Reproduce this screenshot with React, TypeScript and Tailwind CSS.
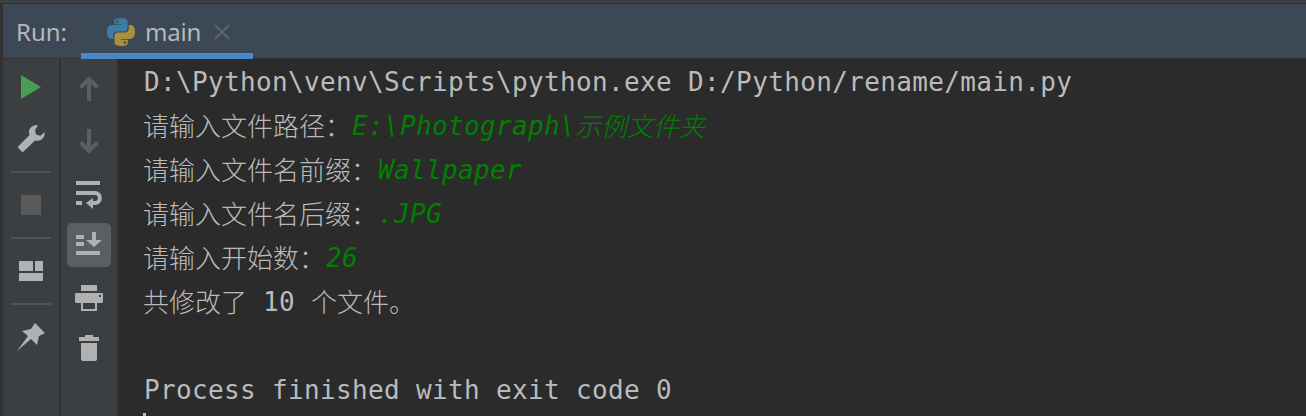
import React from "react";

function Latin({ children, green, still }: { children: React.ReactNode; green?: boolean; still?: boolean }) {
  return (
    <span className={`font-['DejaVu_Sans_Mono',monospace] text-[26px] tracking-[0.35px] whitespace-pre ${still ? "" : "translate-x-px"} ${green ? "italic text-[#008000]" : ""}`}>
      {children}
    </span>
  );
}

function Cjk({ children, green }: { children: React.ReactNode; green?: boolean }) {
  return (
    <span className={`font-['Noto_Sans_CJK_SC',sans-serif] font-light text-[26px] mb-[2px] whitespace-pre ${green ? "italic text-[#008000]" : ""}`}>
      {children}
    </span>
  );
}

function Row({ children }: { children?: React.ReactNode }) {
  return <div className="h-[44px] flex items-center whitespace-pre leading-none">{children}</div>;
}

function Btn({ children, active }: { children: React.ReactNode; active?: boolean }) {
  return (
    <div className={`w-[44px] h-[44px] rounded-[5px] flex items-center justify-center ${active ? "bg-[#5a5f61]" : ""}`}>
      {children}
    </div>
  );
}

function Sep() {
  return (
    <div className="h-[22px] w-full flex items-center justify-center">
      <div className="w-[40px] h-[2px] bg-[#505254]" />
    </div>
  );
}

const C = "#afb1b3";
const D = "#5c5f61";

function PythonLogo() {
  return (
    <svg width="28" height="28" viewBox="0 0 24 24">
      <path fill="#3d7ba6" d="M11.900 0C5.800 0 6.200 2.600 6.200 2.600v2.700h5.800v.8H3.900S0 5.700 0 11.900s3.400 6 3.400 6h2v-2.900s-.1-3.400 3.300-3.400h5.700s3.200.1 3.200-3.100V3.200S18.100 0 11.900 0zM8.700 1.900a1 1 0 1 1 0 2.100 1 1 0 0 1 0-2.100z" />
      <path fill="#a8913c" d="M12.100 24c6.100 0 5.700-2.600 5.700-2.600v-2.700H12v-.8h8.100s3.900.4 3.900-5.800-3.400-6-3.400-6h-2v2.900s.1 3.400-3.300 3.400H9.600s-3.200-.1-3.200 3.100v5.300S5.900 24 12.100 24zm3.200-1.900a1 1 0 1 1 0-2.100 1 1 0 0 1 0 2.100z" />
    </svg>
  );
}

export default function App() {
  return (
    <div className="w-[1306px] h-[416px] overflow-hidden flex flex-col bg-[#2b2b2b] text-[#bbbbbb]">
      <div className="h-[4px] bg-[#3c3f41] border-b border-[#323232]" />
      <div className="h-[55px] flex bg-[#3c4856] border-l-[3px] border-[#323232] border-b border-b-[#323232] font-['Noto_Sans',sans-serif]">
        <div className="w-[78px] pl-[13px] pt-[11px] text-[24px] leading-[34px] text-[#b5b8ba]">Run:</div>
        <div className="w-[172px] h-[55px] flex items-center pl-[26px] pt-[6px] gap-[10px] border-b-[6px] border-[#4a88c7]">
          <PythonLogo />
          <span className="text-[24px] tracking-[-0.2px] leading-none text-[#b5b8ba]">main</span>
          <svg width="16" height="16" viewBox="0 0 16 16" className="ml-[3px]">
            <path d="M1 1 L15 15 M15 1 L1 15" stroke="#5f6468" strokeWidth="2" />
          </svg>
        </div>
      </div>
      <div className="flex-1 flex min-h-0">
        <div className="w-[3px] bg-[#323232]" />
        <div className="w-[56px] bg-[#3c3f41] flex flex-col items-center pt-[6px]">
          <Btn>
            <svg width="20" height="24" viewBox="0 0 20 24"><path d="M0 0 L20 12 L0 24 Z" fill="#499c54" /></svg>
          </Btn>
          <div className="h-[8px]" />
          <Btn>
            <svg width="28" height="28" viewBox="0 0 28 28">
              <path fill={C} d="M21 0.500 C17 -0.500 12.500 2 12 6.500 C11.900 7.800 12.100 9 12.600 10 L0.500 22 L5.500 27.500 L18 15.400 C21.500 16.500 25.500 15 27 11.500 C27.700 10 27.800 8.500 27.500 7 L23.500 10.800 L19 9.500 L18 5 Z" />
            </svg>
          </Btn>
          <Sep />
          <Btn><div className="w-[20px] h-[20px] bg-[#5a5a5a]" /></Btn>
          <Sep />
          <Btn>
            <svg width="24" height="20" viewBox="0 0 24 20">
              <path fill={C} d="M0 0 H14 V10 H0 Z M16 0 H24 V10 H16 Z M0 12 H24 V20 H0 Z" />
            </svg>
          </Btn>
          <Sep />
          <Btn>
            <svg width="28" height="28" viewBox="0 0 28 28">
              <path fill={C} d="M18 0 L28 10 L22 13 L20 22 L14 16 L0 28 L11 13 L5 8 L14 6 Z" />
            </svg>
          </Btn>
        </div>
        <div className="w-[2px] bg-[#323232]" />
        <div className="w-[56px] bg-[#3c3f41] flex flex-col items-center pt-[8px] gap-[8px]">
          <Btn>
            <svg width="20" height="24" viewBox="0 0 20 24"><path d="M10 3 V24 M1.500 10.500 L10 2 L18.500 10.500" stroke={D} strokeWidth="4" fill="none" /></svg>
          </Btn>
          <Btn>
            <svg width="20" height="24" viewBox="0 0 20 24"><path d="M10 0 V21 M1.500 13.500 L10 22 L18.500 13.500" stroke={D} strokeWidth="4" fill="none" /></svg>
          </Btn>
          <Btn>
            <svg width="26" height="28" viewBox="0 0 26 28" className="mt-[4px]">
              <path fill={C} d="M0 0 H24 V4 H0 Z M0 10 H18 V14 H0 Z M0 20 H6 V24 H0 Z" />
              <path d="M15 22 H19 C25.500 22 25.500 12 19 12 H17" stroke={C} strokeWidth="4" fill="none" />
              <path fill={C} d="M10 22 L17 17 L17 28 Z" />
            </svg>
          </Btn>
          <Btn active>
            <svg width="26" height="23" viewBox="0 0 26 23" className="mb-[3px]">
              <path fill={C} d="M0 3 H8 V7 H0 Z M0 10 H8 V14 H0 Z M0 19 H24 V23 H0 Z M16 0 H20 V8 H26 L18 15 L10 8 H16 Z" />
            </svg>
          </Btn>
          <Btn>
            <svg width="28" height="26" viewBox="0 0 28 26" className="mt-[2px]">
              <path fill={C} fillRule="evenodd" d="M6 0 H22 V6 H6 Z M1 8 H27 Q28 8 28 9 V17 L27 18 H22 V26 H6 V18 H1 L0 17 V9 Q0 8 1 8 Z M24 10 V12 H26 V10 Z M8 18 V24 H20 V18 Z" />
            </svg>
          </Btn>
          <Btn>
            <svg width="20" height="26" viewBox="0 0 20 26" className="mb-[2px]">
              <path fill={C} d="M6 0 H14 V2 H20 V6 H0 V2 H6 Z M2 8 H18 V24 Q18 26 16 26 H4 Q2 26 2 24 Z" />
            </svg>
          </Btn>
        </div>
        <div className="flex-1 bg-[#2b2b2b] border-l border-[#323232] pl-[25px] pt-[1px]">
          <Row><Latin>{"D:\\Python\\venv\\Scripts\\python.exe D:/Python/rename/main.py"}</Latin></Row>
          <Row><Cjk>请输入文件路径：</Cjk><Latin green>{"E:\\Photograph\\"}</Latin><Cjk green>示例文件夹</Cjk></Row>
          <Row><Cjk>请输入文件名前缀：</Cjk><Latin green>Wallpaper</Latin></Row>
          <Row><Cjk>请输入文件名后缀：</Cjk><Latin green>.JPG</Latin></Row>
          <Row><Cjk>请输入开始数：</Cjk><Latin green>26</Latin></Row>
          <Row><Cjk>共修改了</Cjk><Latin still> 10 </Latin><Cjk>个文件。</Cjk></Row>
          <Row />
          <Row><Latin>Process finished with exit code 0</Latin></Row>
          <div className="w-[3px] h-[3px] mt-[1px] bg-[#bbbbbb]" />
        </div>
      </div>
    </div>
  );
}
